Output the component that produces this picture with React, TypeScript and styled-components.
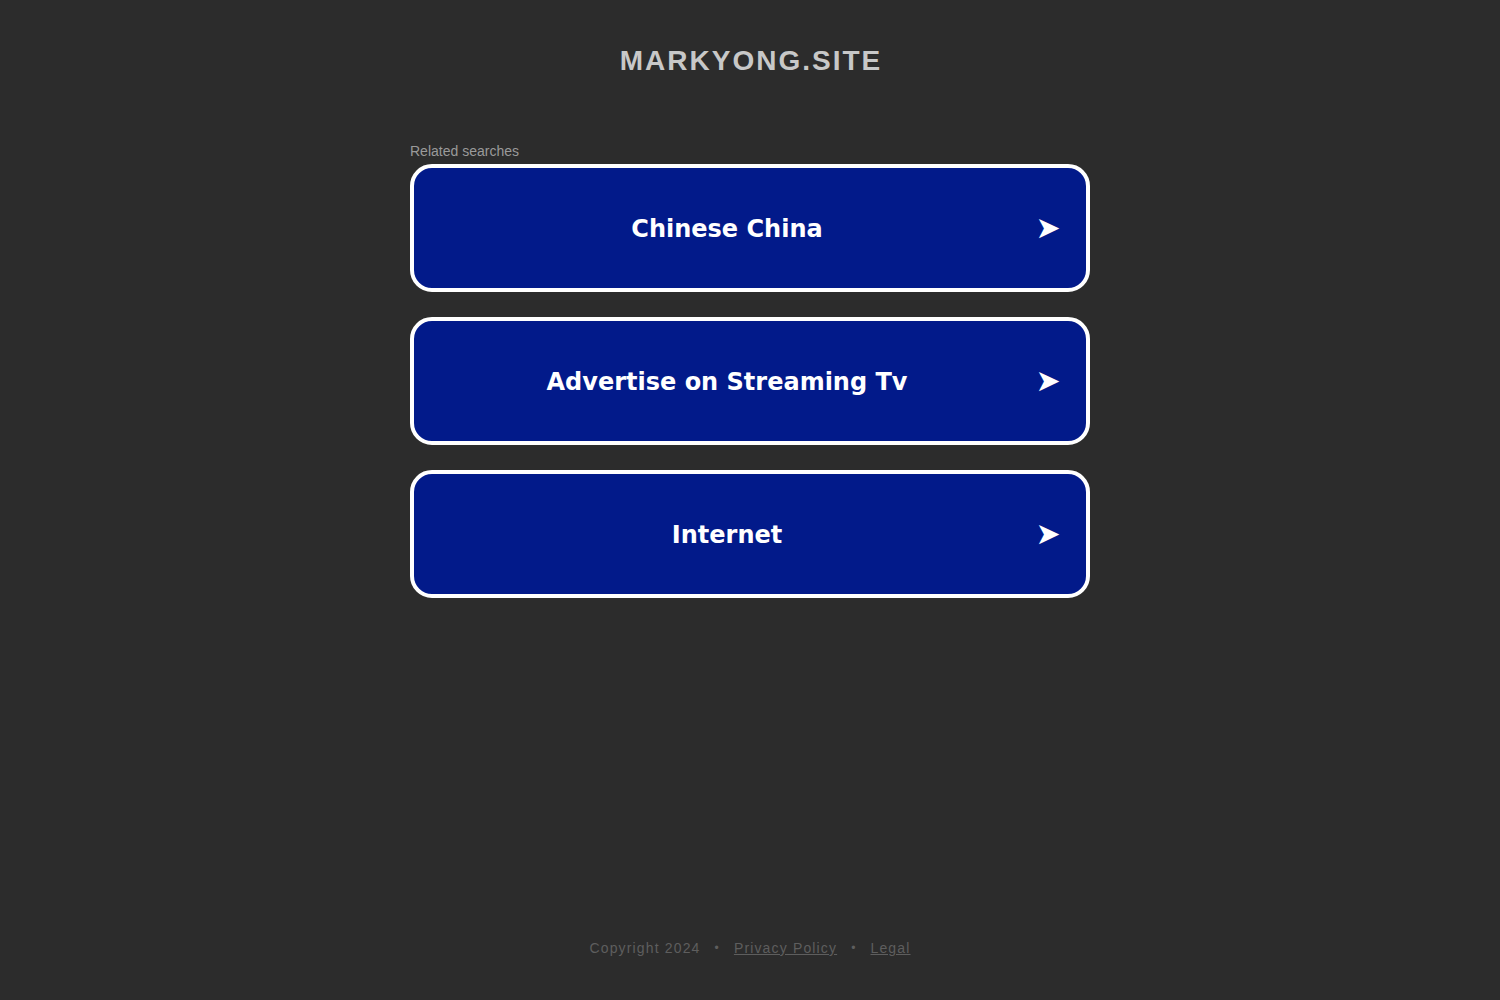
import React from "react";
import styled, { createGlobalStyle } from "styled-components";

const Global = createGlobalStyle`
  html, body { margin: 0; padding: 0; background: #2c2c2c; }
  body { font-family: "Liberation Sans", Arial, sans-serif; }
`;

const Page = styled.div`
  min-height: 1000px;
  display: flex;
  flex-direction: column;
  align-items: center;
`;

const Title = styled.h1`
  margin: 0;
  padding-top: 43px;
  padding-left: 2px;
  font-family: "Liberation Sans", Arial, sans-serif;
  font-size: 28px;
  font-weight: 700;
  letter-spacing: 2px;
  line-height: 36px;
  color: #c8c8c8;
`;

const Main = styled.main`
  width: 680px;
  margin-top: 64px;
  display: flex;
  flex-direction: column;
`;

const Label = styled.div`
  font-size: 14px;
  line-height: 16px;
  color: #9a9a9a;
  margin-bottom: 5px;
`;

const List = styled.div`
  display: flex;
  flex-direction: column;
  gap: 25px;
`;

const Item = styled.a`
  box-sizing: border-box;
  height: 128px;
  display: flex;
  align-items: center;
  padding: 0 18px 0 12px;
  background: #021a8a;
  border: 4px solid #ffffff;
  border-radius: 22px;
  color: #ffffff;
  text-decoration: none;
  cursor: pointer;
`;

const ItemText = styled.span`
  flex: 1;
  text-align: center;
  font-family: "DejaVu Sans", Verdana, sans-serif;
  font-weight: 700;
  font-size: 24px;
  padding-top: 2px;
`;

const Arrow = styled.span`
  width: 40px;
  text-align: center;
  font-family: "DejaVu Sans", sans-serif;
  font-size: 30px;
  line-height: 1;
`;

const Footer = styled.footer`
  margin-top: auto;
  padding-bottom: 44px;
  font-size: 14px;
  letter-spacing: 1.15px;
  color: #5e5e5e;
  display: flex;
  align-items: center;
  gap: 14px;
`;

const FooterLink = styled.a`
  color: #5e5e5e;
  text-decoration: underline;
`;

const Dot = styled.span`
  font-size: 12px;
`;

const items = ["Chinese China", "Advertise on Streaming Tv", "Internet"];

export default function App() {
  return (
    <>
      <Global />
      <Page>
        <Title>MARKYONG.SITE</Title>
        <Main>
          <Label>Related searches</Label>
          <List>
            {items.map((t) => (
              <Item key={t}>
                <ItemText>{t}</ItemText>
                <Arrow>➤</Arrow>
              </Item>
            ))}
          </List>
        </Main>
        <Footer>
          <span>Copyright 2024</span>
          <Dot>•</Dot>
          <FooterLink>Privacy Policy</FooterLink>
          <Dot>•</Dot>
          <FooterLink>Legal</FooterLink>
        </Footer>
      </Page>
    </>
  );
}
